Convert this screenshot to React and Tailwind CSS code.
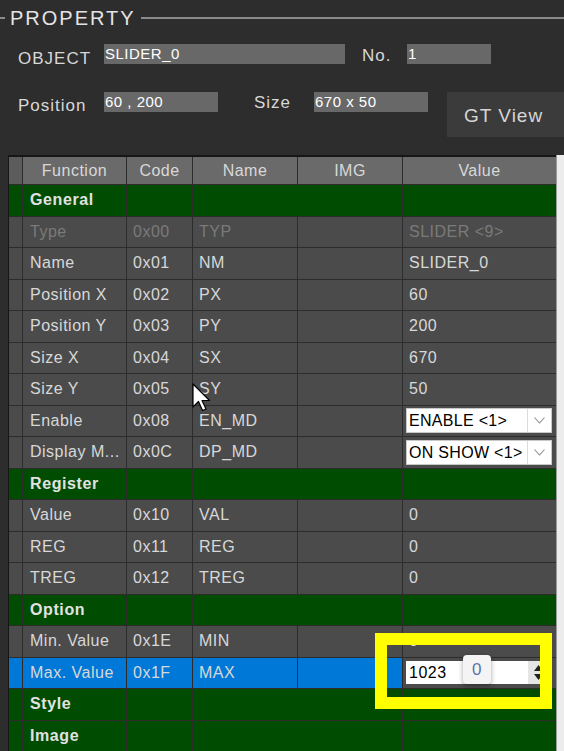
import React from "react";

const ROWS = [
  { group: "General" },
  { fn: "Type", code: "0x00", name: "TYP", value: "SLIDER <9>", disabled: true },
  { fn: "Name", code: "0x01", name: "NM", value: "SLIDER_0" },
  { fn: "Position X", code: "0x02", name: "PX", value: "60" },
  { fn: "Position Y", code: "0x03", name: "PY", value: "200" },
  { fn: "Size X", code: "0x04", name: "SX", value: "670" },
  { fn: "Size Y", code: "0x05", name: "SY", value: "50" },
  { fn: "Enable", code: "0x08", name: "EN_MD", value: "ENABLE <1>", select: true },
  { fn: "Display M...", code: "0x0C", name: "DP_MD", value: "ON SHOW <1>", select: true },
  { group: "Register" },
  { fn: "Value", code: "0x10", name: "VAL", value: "0" },
  { fn: "REG", code: "0x11", name: "REG", value: "0" },
  { fn: "TREG", code: "0x12", name: "TREG", value: "0" },
  { group: "Option" },
  { fn: "Min. Value", code: "0x1E", name: "MIN", value: "0" },
  { fn: "Max. Value", code: "0x1F", name: "MAX", value: "1023", spin: true, selected: true },
  { group: "Style" },
  { group: "Image" },
];

const font = { fontFamily: '"Liberation Sans", Arial, sans-serif' };

// grid line between cells
const Sep = () => <div className="w-px shrink-0 bg-[#2c2c2c]" />;

function Field({ value, className }) {
  return (
    <div
      className={`shrink-0 h-[20px] bg-[#686868] text-white text-[15px] leading-[20px] pl-[1px] tracking-[0.5px] ${className}`}
    >
      {value}
    </div>
  );
}

function SelectBox({ value }) {
  return (
    <div className="flex h-[25px] w-[146px] bg-white border border-[#c8c8c8] text-black text-[16px] leading-[23px]">
      <span className="flex-1 pl-[2px] tracking-[0.3px]">{value}</span>
      <span className="w-[24px] border-l border-[#dcdcdc] flex items-center justify-center">
        <svg width="11" height="7" viewBox="0 0 11 7">
          <path d="M0.5 0.5 L5.5 6 L10.5 0.5" fill="none" stroke="#8c8c8c" strokeWidth="1.1" />
        </svg>
      </span>
    </div>
  );
}

function SpinBox({ value }) {
  return (
    <div className="relative flex h-[23px] w-[142px] bg-white text-black text-[16px] leading-[23px]">
      <span className="flex-1 pl-[3px]">{value}</span>
      <span className="w-[20px] bg-[#e6e6e6] flex flex-col items-center justify-center gap-[3px]">
        <svg width="9" height="6" viewBox="0 0 9 6">
          <path d="M0 6 L4.5 0 L9 6 Z" fill="#222" />
        </svg>
        <svg width="9" height="6" viewBox="0 0 9 6">
          <path d="M0 0 L4.5 6 L9 0 Z" fill="#222" />
        </svg>
      </span>
      {/* tooltip bubble */}
      <div className="absolute left-[57px] top-[-6px] w-[28px] h-[29px] rounded-[4px] bg-[#f4f4f4] shadow-[0_2px_5px_rgba(0,0,0,0.35)] flex items-center justify-center text-[17px] text-[#5b73aa]">
        0
      </div>
    </div>
  );
}

function Row({ row }) {
  if (row.group) {
    return (
      <div className="flex h-[31.5px] bg-[#004c00] border-b border-[#2c2c2c]">
        <div className="w-[13px] shrink-0" />
        <Sep />
        <div className="w-[103px] shrink-0 pl-[7px] flex items-center text-[16px] font-bold text-[#e2e2e2] tracking-[0.6px]">
          {row.group}
        </div>
        <Sep />
        <div className="w-[65px] shrink-0" />
        <Sep />
        <div className="w-[104px] shrink-0" />
        <Sep />
        <div className="w-[104px] shrink-0" />
        <Sep />
        <div className="flex-1" />
      </div>
    );
  }
  const bg = row.selected ? "bg-[#0078d7]" : "bg-[#4b4b4b]";
  const tc = row.disabled ? "text-[#7a7a7a]" : "text-[#d8d8d8]";
  return (
    <div className={`flex h-[31.5px] border-b border-[#2c2c2c] ${tc} text-[16px] tracking-[0.5px]`}>
      <div className={`w-[13px] shrink-0 ${bg}`} />
      <Sep />
      <div className={`w-[103px] shrink-0 pl-[7px] flex items-center whitespace-nowrap ${bg}`}>
        {row.fn}
      </div>
      <Sep />
      <div className={`w-[65px] shrink-0 pl-[6px] flex items-center ${bg}`}>{row.code}</div>
      <Sep />
      <div className={`w-[104px] shrink-0 pl-[6px] flex items-center ${bg}`}>{row.name}</div>
      <Sep />
      <div className={`w-[104px] shrink-0 ${bg}`} />
      <Sep />
      <div className="flex-1 bg-[#4b4b4b] flex items-center pl-[3px]">
        {row.select ? (
          <SelectBox value={row.value} />
        ) : row.spin ? (
          <SpinBox value={row.value} />
        ) : (
          <span className="pl-[3px]">{row.value}</span>
        )}
      </div>
    </div>
  );
}

function Header() {
  const cell = "shrink-0 flex items-center justify-center";
  return (
    <div className="flex h-[28px] bg-[#6a6a6a] border-b border-[#2c2c2c] text-[16px] text-[#d8d8d8] tracking-[0.5px]">
      <div className="w-[13px] shrink-0 bg-[#5c5c5c]" />
      <Sep />
      <div className={`w-[103px] ${cell}`}>Function</div>
      <Sep />
      <div className={`w-[65px] ${cell}`}>Code</div>
      <Sep />
      <div className={`w-[104px] ${cell}`}>Name</div>
      <Sep />
      <div className={`w-[104px] ${cell}`}>IMG</div>
      <Sep />
      <div className="flex-1 flex items-center justify-center">Value</div>
    </div>
  );
}

export default function App() {
  return (
    <div className="relative w-[564px] h-[751px] overflow-hidden bg-[#2d2d2d]" style={font}>
      {/* Group box title */}
      <div className="flex items-center h-[34px] pt-[1px]">
        <div className="w-[5px] h-[2px] bg-[#8a8a8a]" />
        <span className="px-[5px] text-[20px] leading-[34px] text-[#e4e4e4] tracking-[2px]">
          PROPERTY
        </span>
        <div className="flex-1 h-[2px] bg-[#8a8a8a]" />
      </div>

      {/* Object / number */}
      <div className="flex items-start mt-[10px] h-[20px] text-[17px] text-[#d8d8d8] tracking-[1px]">
        <span className="w-[104px] shrink-0 pl-[18px] h-[20px] leading-[29px]">OBJECT</span>
        <Field value="SLIDER_0" className="w-[241px]" />
        <span className="w-[62px] shrink-0 pl-[17px] h-[20px] leading-[24px]">No.</span>
        <Field value="1" className="w-[84px]" />
      </div>

      {/* Position / size / view */}
      <div className="flex items-start mt-[28px] text-[17px] text-[#d8d8d8] tracking-[1px]">
        <span className="w-[104px] shrink-0 pl-[18px] h-[20px] leading-[28px]">Position</span>
        <Field value="60 , 200" className="w-[114px]" />
        <span className="w-[96px] shrink-0 pl-[36px] h-[20px] leading-[22px]">Size</span>
        <Field value="670 x 50" className="w-[114px]" />
        <div className="shrink-0 ml-[19px] w-[120px] h-[45px] bg-[#3b3b3b] flex items-center pl-[17px] pt-[3px] text-[19px] text-[#d6d6d6]">
          GT View
        </div>
      </div>

      {/* Property grid */}
      <div className="flex mt-[18px] h-[600px]">
        <div className="w-[8px] shrink-0" />
        <div className="w-[548px] shrink-0 border-l border-t-2 border-[#161616] bg-[#2c2c2c]">
          <Header />
          {ROWS.map((row, i) => (
            <Row key={i} row={row} />
          ))}
        </div>
        <div className="flex-1 bg-[#ececec] border-l border-[#9a9a9a]" />
      </div>

      {/* highlight frame around the edited value */}
      <div className="absolute left-[375px] top-[633px] w-[177px] h-[76px] border-[12px] border-[#ffff00]" />

      {/* mouse pointer */}
      <svg className="absolute left-[192px] top-[383px]" width="20" height="30" viewBox="0 0 20 30">
        <path
          d="M1 1 L1 24 L6.5 18.5 L10.5 27.5 L14 26 L10 17.5 L17.5 17.5 Z"
          fill="#fff"
          stroke="#000"
          strokeWidth="1.2"
          strokeLinejoin="round"
        />
      </svg>
    </div>
  );
}
